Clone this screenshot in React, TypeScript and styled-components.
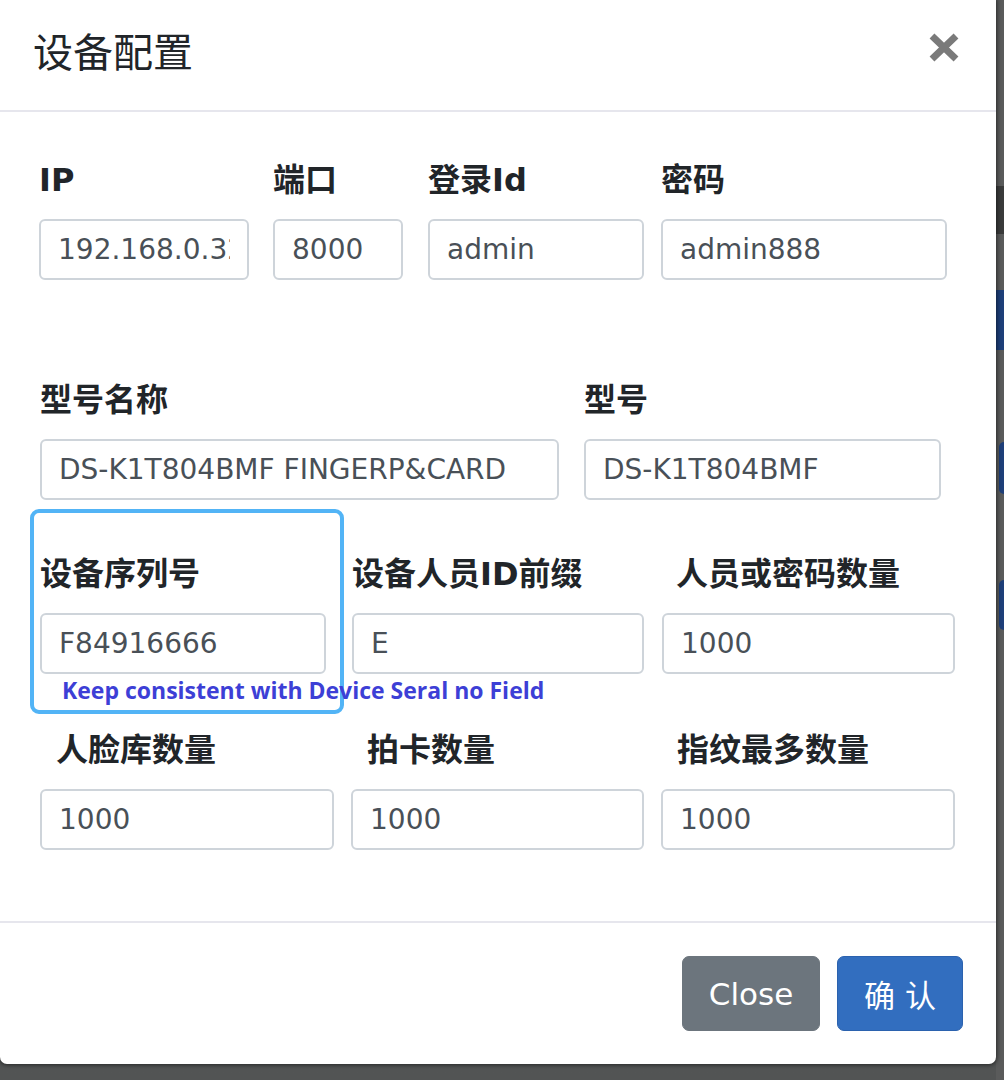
import React from "react";
import styled, { createGlobalStyle } from "styled-components";

const GlobalStyle = createGlobalStyle`
  html, body {
    margin: 0;
    padding: 0;
    background: #555757;
  }
  body {
    font-family: "DejaVu Sans", "Noto Sans CJK SC", sans-serif;
  }
`;

const Screen = styled.div`
  display: flex;
  align-items: flex-start;
  width: 1004px;
  height: 1080px;
  overflow: hidden;
  background: linear-gradient(180deg, #5a5b5b 0%, #525454 100%);
`;

const Modal = styled.div`
  flex: none;
  width: 996px;
  height: 1064px;
  background: #ffffff;
  border-radius: 0 0 7px 7px;
  box-shadow: 0 0 4px 1px rgba(0, 0, 0, 0.55);
  display: flex;
  flex-direction: column;
  position: relative;
  z-index: 1;
`;

const Header = styled.div`
  flex: none;
  height: 112px;
  box-sizing: border-box;
  border-bottom: 2px solid #e6e6ed;
  display: flex;
  align-items: center;
  justify-content: space-between;
  padding: 0 36px 10px 33px;
`;

const Title = styled.h4`
  margin: 0;
  font-family: "Noto Sans CJK SC", sans-serif;
  font-size: 40px;
  font-weight: 400;
  line-height: 1.2;
  color: #212529;
`;

const CloseX = styled.button`
  border: 0;
  background: transparent;
  padding: 0;
  margin-bottom: 6px;
  width: 32px;
  height: 32px;
  display: flex;
  align-items: center;
  justify-content: center;
  cursor: pointer;
`;

const Body = styled.div`
  flex: 1;
  padding: 49px 0 0 0;
`;

const Row = styled.div<{ $mt?: number }>`
  display: flex;
  align-items: flex-start;
  margin-top: ${(p) => p.$mt ?? 0}px;
`;

const Field = styled.div<{ $w: number; $ml: number; $pt?: number }>`
  flex: none;
  width: ${(p) => p.$w}px;
  margin-left: ${(p) => p.$ml}px;
  padding-top: ${(p) => p.$pt ?? 0}px;
`;

const HighlightBox = styled.div`
  flex: none;
  box-sizing: border-box;
  width: 314px;
  margin-left: 30px;
  border: 4px solid #52b4f6;
  border-radius: 9px;
  padding: 42px 14px 7px 6px;
`;

const Label = styled.label<{ $indent?: number }>`
  display: block;
  font-family: "DejaVu Sans", "Noto Sans CJK SC", sans-serif;
  font-size: 32px;
  font-weight: 700;
  line-height: 38px;
  color: #212529;
  margin: 0 0 20px 0;
  padding-left: ${(p) => p.$indent ?? 0}px;
  white-space: nowrap;
`;

const Input = styled.input`
  display: block;
  box-sizing: border-box;
  width: 100%;
  height: 61px;
  border: 2px solid #ced4da;
  border-radius: 6px;
  padding: 0 17px;
  font-family: "DejaVu Sans", "Noto Sans CJK SC", sans-serif;
  font-size: 28px;
  color: #495057;
  background: #fff;
  outline: none;
`;

const Help = styled.div`
  margin: 3px 0 0 22px;
  font-family: "Open Sans", "Noto Sans", sans-serif;
  font-size: 23px;
  font-weight: 700;
  line-height: 26px;
  color: #3d3fd6;
  white-space: nowrap;
`;

const Footer = styled.div`
  flex: none;
  height: 143px;
  box-sizing: border-box;
  border-top: 2px solid #e6e6ed;
  display: flex;
  align-items: center;
  justify-content: flex-end;
  gap: 17px;
  padding: 0 33px 0 0;
`;

const Button = styled.button<{ $variant: "secondary" | "primary"; $w: number }>`
  box-sizing: border-box;
  width: ${(p) => p.$w}px;
  height: 75px;
  border-radius: 7px;
  border: 1px solid ${(p) => (p.$variant === "primary" ? "#2b62ae" : "#6c757d")};
  background: ${(p) => (p.$variant === "primary" ? "#326ebf" : "#6c757d")};
  color: #ffffff;
  font-family: "DejaVu Sans", "Noto Sans CJK SC", sans-serif;
  font-size: 31px;
  font-weight: 400;
  cursor: pointer;
`;

const BackStrip = styled.div`
  flex: 1;
  align-self: stretch;
  display: flex;
  flex-direction: column;
  background: #5a5b5b;
`;

const BackBlock = styled.div<{ $mt: number; $h: number; $c: string; $round?: boolean }>`
  margin-top: ${(p) => p.$mt}px;
  height: ${(p) => p.$h}px;
  background: ${(p) => p.$c};
  border-radius: ${(p) => (p.$round ? "8px 0 0 8px" : "0")};
  margin-left: ${(p) => (p.$round ? "3px" : "0")};
`;

export default function App() {
  return (
    <>
      <GlobalStyle />
      <Screen>
        <Modal>
          <Header>
            <Title>设备配置</Title>
            <CloseX aria-label="Close">
              <svg width="32" height="31" viewBox="0 0 32 31">
                <path d="M4 4 L28 27 M28 4 L4 27" stroke="#7a7a7a" strokeWidth="7" strokeLinecap="butt" />
              </svg>
            </CloseX>
          </Header>
          <Body>
            <Row>
              <Field $w={210} $ml={39}>
                <Label>IP</Label>
                <Input defaultValue="192.168.0.32" />
              </Field>
              <Field $w={130} $ml={24}>
                <Label>端口</Label>
                <Input defaultValue="8000" />
              </Field>
              <Field $w={216} $ml={25}>
                <Label>登录Id</Label>
                <Input defaultValue="admin" />
              </Field>
              <Field $w={286} $ml={17}>
                <Label>密码</Label>
                <Input defaultValue="admin888" />
              </Field>
            </Row>
            <Row $mt={101}>
              <Field $w={519} $ml={40}>
                <Label>型号名称</Label>
                <Input defaultValue="DS-K1T804BMF FINGERP&CARD" />
              </Field>
              <Field $w={357} $ml={25}>
                <Label>型号</Label>
                <Input defaultValue="DS-K1T804BMF" />
              </Field>
            </Row>
            <Row $mt={9}>
              <HighlightBox>
                <Label>设备序列号</Label>
                <Input defaultValue="F84916666" />
                <Help>Keep consistent with Device Seral no Field</Help>
              </HighlightBox>
              <Field $w={292} $ml={8} $pt={46}>
                <Label>设备人员ID前缀</Label>
                <Input defaultValue="E" />
              </Field>
              <Field $w={293} $ml={18} $pt={46}>
                <Label $indent={14}>人员或密码数量</Label>
                <Input defaultValue="1000" />
              </Field>
            </Row>
            <Row $mt={17}>
              <Field $w={294} $ml={40}>
                <Label $indent={16}>人脸库数量</Label>
                <Input defaultValue="1000" />
              </Field>
              <Field $w={293} $ml={17}>
                <Label $indent={16}>拍卡数量</Label>
                <Input defaultValue="1000" />
              </Field>
              <Field $w={294} $ml={17}>
                <Label $indent={16}>指纹最多数量</Label>
                <Input defaultValue="1000" />
              </Field>
            </Row>
          </Body>
          <Footer>
            <Button $variant="secondary" $w={138}>Close</Button>
            <Button $variant="primary" $w={126}>确 认</Button>
          </Footer>
        </Modal>
        <BackStrip>
          <BackBlock $mt={186} $h={48} $c="#3a3b3b" />
          <BackBlock $mt={56} $h={60} $c="#1e3f79" />
          <BackBlock $mt={92} $h={52} $c="#1e3f79" $round />
          <BackBlock $mt={86} $h={50} $c="#1e3f79" $round />
        </BackStrip>
      </Screen>
    </>
  );
}
